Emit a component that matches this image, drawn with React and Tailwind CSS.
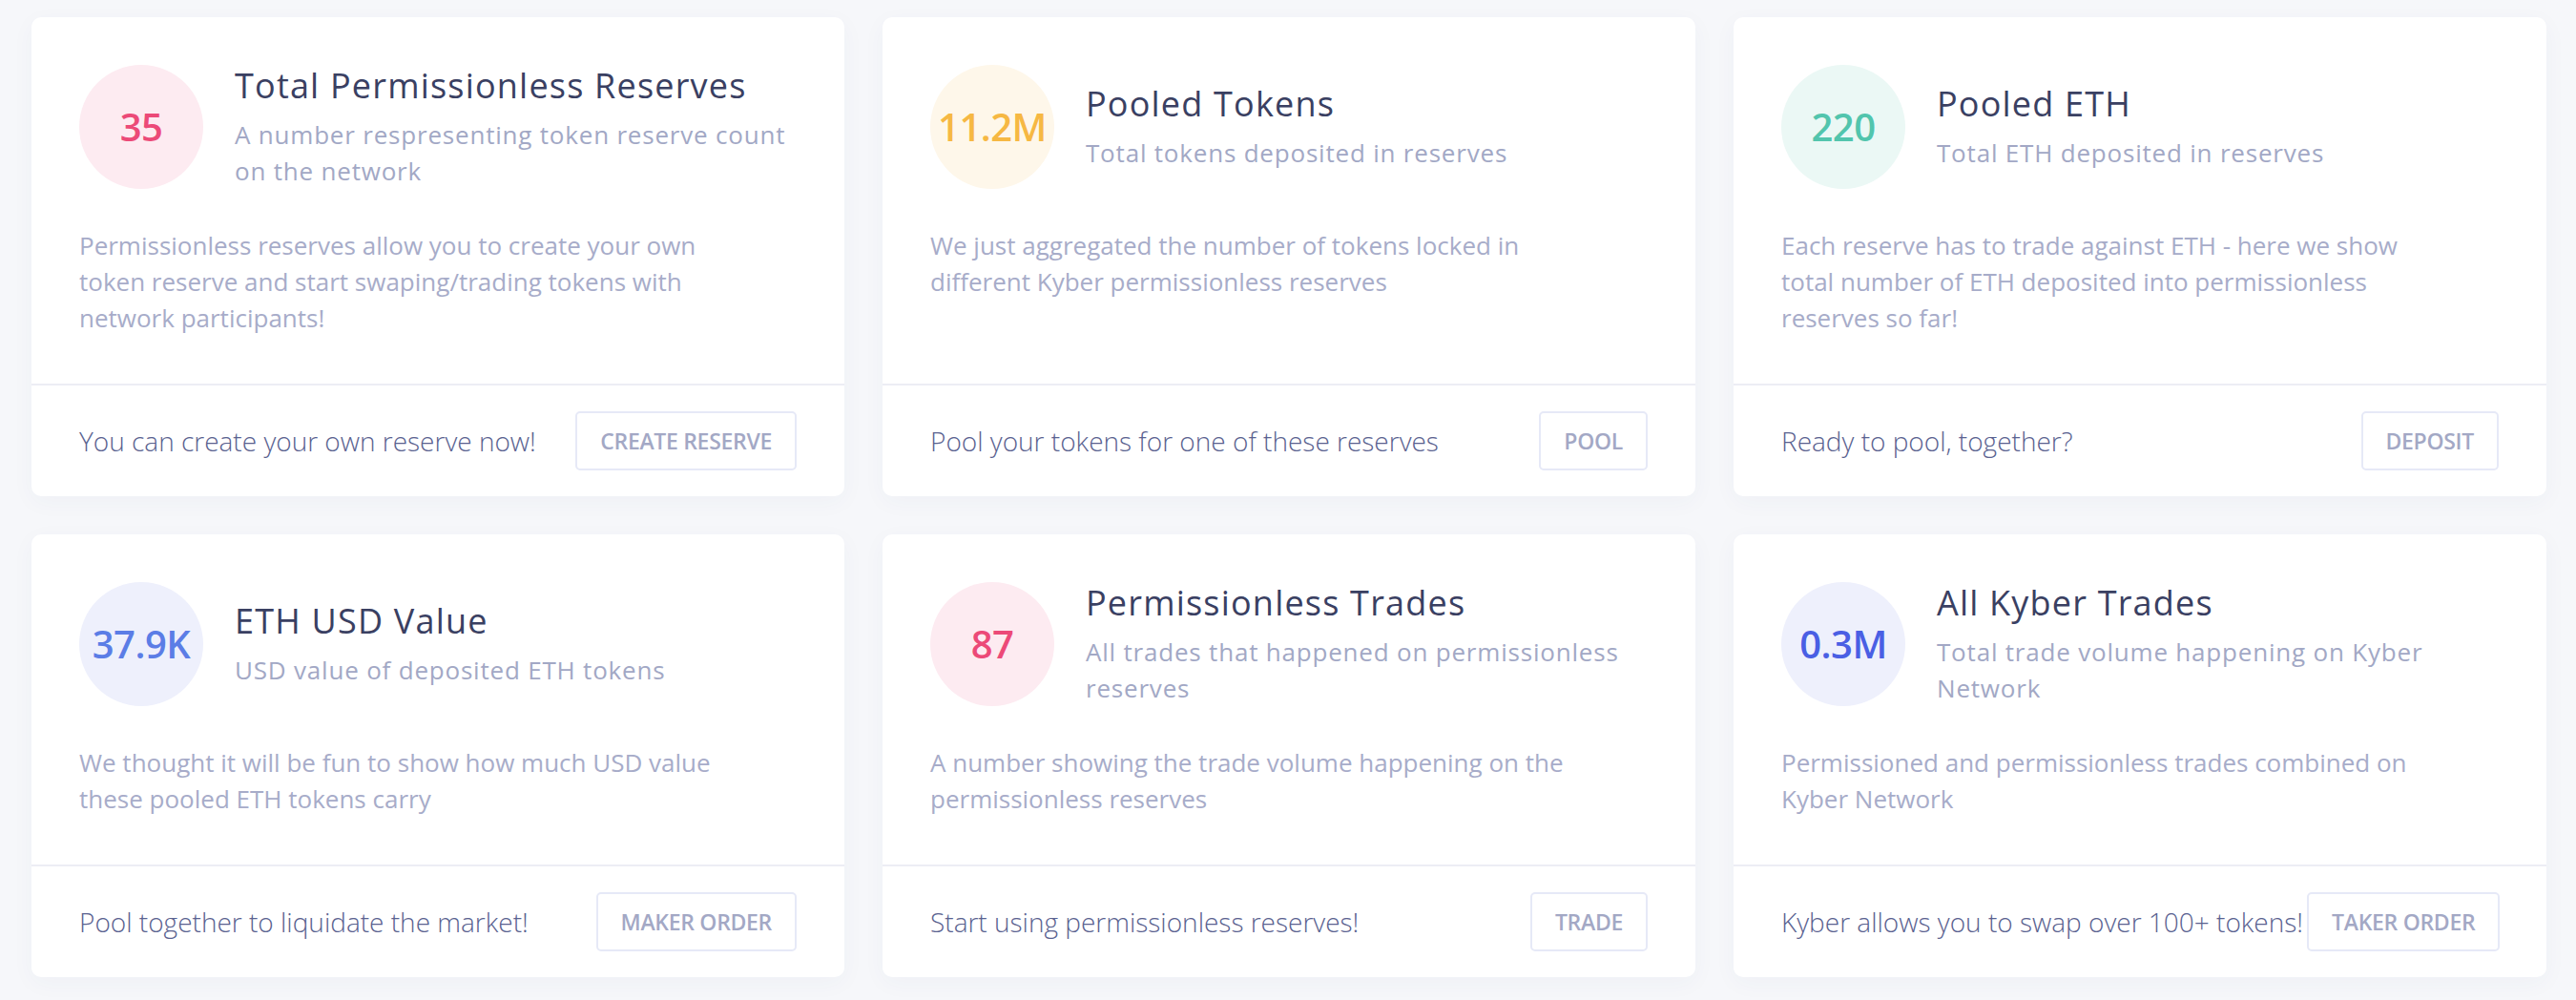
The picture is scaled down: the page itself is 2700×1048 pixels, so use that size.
import React from 'react';

const tones = {
  pink: 'bg-[#fdebf1] text-[#ec4a78]',
  orange: 'bg-[#fef7ea] text-[#f6b843]',
  teal: 'bg-[#ebf8f5] text-[#52c5ad]',
  blue: 'bg-[#eef0fc] text-[#5b7de6]',
  indigo: 'bg-[#eef0fc] text-[#4a5fe4]',
};

const cards = [
  {
    value: '35',
    tone: 'pink',
    title: 'Total Permissionless Reserves',
    sub: ['A number respresenting token reserve count', 'on the network'],
    desc: [
      'Permissionless reserves allow you to create your own',
      'token reserve and start swaping/trading tokens with',
      'network participants!',
    ],
    note: 'You can create your own reserve now!',
    action: 'CREATE RESERVE',
  },
  {
    value: '11.2M',
    tone: 'orange',
    title: 'Pooled Tokens',
    sub: ['Total tokens deposited in reserves'],
    desc: ['We just aggregated the number of tokens locked in', 'different Kyber permissionless reserves'],
    note: 'Pool your tokens for one of these reserves',
    action: 'POOL',
  },
  {
    value: '220',
    tone: 'teal',
    title: 'Pooled ETH',
    sub: ['Total ETH deposited in reserves'],
    desc: [
      'Each reserve has to trade against ETH - here we show',
      'total number of ETH deposited into permissionless',
      'reserves so far!',
    ],
    note: 'Ready to pool, together?',
    action: 'DEPOSIT',
  },
  {
    value: '37.9K',
    tone: 'blue',
    title: 'ETH USD Value',
    sub: ['USD value of deposited ETH tokens'],
    desc: ['We thought it will be fun to show how much USD value', 'these pooled ETH tokens carry'],
    note: 'Pool together to liquidate the market!',
    action: 'MAKER ORDER',
  },
  {
    value: '87',
    tone: 'pink',
    title: 'Permissionless Trades',
    sub: ['All trades that happened on permissionless', 'reserves'],
    desc: ['A number showing the trade volume happening on the', 'permissionless reserves'],
    note: 'Start using permissionless reserves!',
    action: 'TRADE',
  },
  {
    value: '0.3M',
    tone: 'indigo',
    title: 'All Kyber Trades',
    sub: ['Total trade volume happening on Kyber', 'Network'],
    desc: ['Permissioned and permissionless trades combined on', 'Kyber Network'],
    note: 'Kyber allows you to swap over 100+ tokens!',
    action: 'TAKER ORDER',
  },
];

const Lines = ({ lines }) =>
  lines.map((line, i) => (
    <span key={i} className="block whitespace-nowrap">
      {line}
    </span>
  ));

const StatCard = ({ value, tone, title, sub, desc, note, action }) => (
  <div className="flex flex-col bg-white rounded-[10px] shadow-[0_6px_24px_rgba(60,70,120,0.04)]">
    <div className="flex-1 p-[50px]">
      <div className="flex items-center gap-[33px]">
        <div
          className={`w-[130px] h-[130px] shrink-0 rounded-full flex items-center justify-center text-[40px] font-semibold tracking-[-0.5px] ${tones[tone]}`}
        >
          {value}
        </div>
        <div>
          <h3 className="text-[36px] leading-[44px] font-medium tracking-[1.2px] text-[#3a4062]">{title}</h3>
          <p className="mt-[10px] text-[26px] leading-[38px] tracking-[0.8px] text-[#a2a8c5]">
            <Lines lines={sub} />
          </p>
        </div>
      </div>
      <p className="mt-[40px] text-[26px] leading-[38px] text-[#a7acc9]">
        <Lines lines={desc} />
      </p>
    </div>
    <div className="border-t-2 border-[#ecedf4] px-[50px] py-[27px] flex items-center justify-between gap-1">
      <span className="text-[28px] font-light text-[#5a6290] whitespace-nowrap">{note}</span>
      <button className="shrink-0 h-[62px] px-[24px] border-2 border-[#e6e9f7] rounded-[5px] text-[23px] font-semibold tracking-[-0.3px] text-[#a3a8c5] whitespace-nowrap">
        {action}
      </button>
    </div>
  </div>
);

export default function App() {
  return (
    <div
      className="min-h-screen bg-[#f6f7fa] pt-[18px] pl-[33px] pb-[24px]"
      style={{ fontFamily: '"Open Sans", "Noto Sans", sans-serif' }}
    >
      <div className="grid grid-cols-[repeat(3,852px)] gap-[40px]">
        {cards.map((c) => (
          <StatCard key={c.title} {...c} />
        ))}
      </div>
    </div>
  );
}
